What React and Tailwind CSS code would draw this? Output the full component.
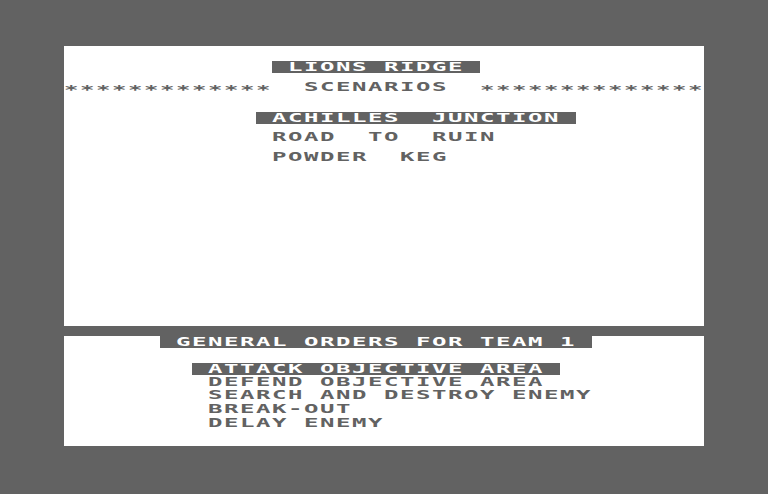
import React from "react";

// one 40-column text line, drawn at half width and stretched 2x like the old hi-res screen
const Line = ({ className = "", children }) => (
  <div
    className={`h-[12px] w-[320px] origin-left scale-x-200 whitespace-pre font-['DejaVu_Sans_Mono',monospace] text-[12px] font-bold leading-[12px] tracking-[0.775px] text-[#626262] ${className}`}
  >
    {children}
  </div>
);

const Inv = ({ children }) => (
  <span className="inline-block h-[12px] bg-[#626262] leading-[12px] text-white">
    {children}
  </span>
);

// asterisks sit lower in the old charset
const Stars = ({ n }) => (
  <span className="relative top-[3px]">{"*".repeat(n)}</span>
);

const App = () => {
  return (
    <div className="h-[494px] w-[768px] overflow-hidden bg-[#626262] pl-[64px] pt-[46px]">
      {/* scenario panel */}
      <div className="h-[280px] w-[640px] overflow-hidden bg-white pt-[15px]">
        <Line>
          {"             "}
          <Inv>{" LIONS RIDGE "}</Inv>
        </Line>
        <Line className="mt-[8px]">
          <Stars n={13} />
          {"  SCENARIOS  "}
          <Stars n={14} />
        </Line>
        <Line className="mt-[19px]">
          {"            "}
          <Inv>{" ACHILLES  JUNCTION "}</Inv>
        </Line>
        <Line className="mt-[7px]">{"             ROAD  TO  RUIN"}</Line>
        <Line className="mt-[8px]">{"             POWDER  KEG"}</Line>
      </div>

      {/* orders panel */}
      <div className="mt-[10px] h-[110px] w-[640px] overflow-hidden bg-white">
        <Line>
          {"      "}
          <Inv>{" GENERAL ORDERS FOR TEAM 1 "}</Inv>
        </Line>
        <Line className="mt-[15px]">
          {"        "}
          <Inv>{" ATTACK OBJECTIVE AREA "}</Inv>
        </Line>
        <Line className="mt-[1px]">{"         DEFEND OBJECTIVE AREA"}</Line>
        <Line className="mt-[1px]">{"         SEARCH AND DESTROY ENEMY"}</Line>
        <Line className="mt-[2px]">{"         BREAK-OUT"}</Line>
        <Line className="mt-[2px]">{"         DELAY ENEMY"}</Line>
      </div>
    </div>
  );
};

export default App;
